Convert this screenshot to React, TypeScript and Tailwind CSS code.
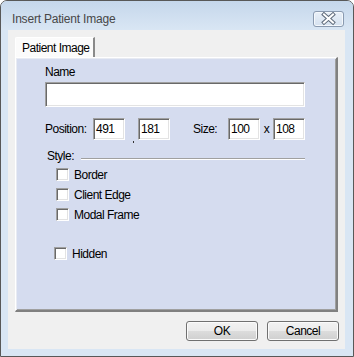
import React from "react";

const sunken =
  "bg-white border border-t-[#a0a0a0] border-l-[#a0a0a0] border-r-white border-b-white shadow-[inset_1px_1px_0_#696969,inset_-1px_-1px_0_#e3e3e3]";

function Field({ value, w = "w-[32px]" }: { value: string; w?: string }) {
  return (
    <div className={`${w} h-[22px] ${sunken} pl-[2px] pt-[3px] leading-[14px]`}>{value}</div>
  );
}

function Check({ label, pl }: { label: string; pl: string }) {
  return (
    <div className={`flex items-center h-[13px] ${pl}`}>
      <div className={`w-[13px] h-[13px] ${sunken}`} />
      <span className="ml-[5px] leading-[14px] mt-[1px] whitespace-nowrap">{label}</span>
    </div>
  );
}

const btn =
  "w-[72px] h-[20px] rounded-[3px] border border-[#707070] bg-[linear-gradient(#f2f2f2_0%,#ebebeb_50%,#dddddd_50%,#cfcfcf_100%)] shadow-[inset_0_0_0_1px_#fbfbfb] flex items-center justify-center leading-[14px] text-black";

export default function App() {
  return (
    <div className="w-[354px] h-[357px] bg-[#d9e6f4] border border-[#585858] rounded-t-[7px] flex flex-col overflow-hidden">
      <div className="h-[29px] flex items-start justify-between pl-[11px] pr-[9px] pt-[10px] bg-[linear-gradient(#c5d7eb,#d9e6f4)]">
        <span className="mt-[1px] text-[12px] leading-[14px] text-[#474747] font-['Liberation_Sans',Arial,sans-serif] tracking-[-0.2px]">
          Insert Patient Image
        </span>
        <div className="w-[31px] h-[16px] rounded-[3px] border border-[#8a9ab0] bg-[linear-gradient(#e9f0f8,#d5e1ef)] shadow-[inset_0_0_0_1px_#f4f8fc]">
          <svg width="29" height="14" viewBox="0 0 29 14">
            <path d="M10 2.5 L19 10.5 M19 2.5 L10 10.5" stroke="#5f6b7b" strokeWidth="4" strokeLinecap="square" />
            <path d="M10 2.5 L19 10.5 M19 2.5 L10 10.5" stroke="#ffffff" strokeWidth="2" strokeLinecap="square" />
          </svg>
        </div>
      </div>
      <div className="ml-[7px] mr-[8px] h-[319px] bg-[#f0f0f0] flex flex-col pl-[7px] pt-[7px] text-[12px] tracking-[-0.5px] text-black font-['Liberation_Sans',Arial,sans-serif]">
        <div className="flex">
          <div className="w-[80px] h-[20px] bg-[#fbfbfb] border-t border-l border-white border-r-2 border-r-[#8a8a8a] rounded-tl-[2px] pl-[6px] pt-[3px] leading-[14px] whitespace-nowrap">
            Patient Image
          </div>
        </div>
        <div className="w-[323px] h-[255px] bg-[#d5dcef] border-t border-l border-white border-r-2 border-b-2 border-r-[#808080] border-b-[#808080] shadow-[inset_1px_1px_0_#e8ebf3,inset_-1px_-1px_0_#a0a0a0] flex flex-col pl-[29px] pr-[31px] pt-[7px]">
          <div className="leading-[14px]">Name</div>
          <div className={`mt-[3px] w-[260px] h-[25px] ${sunken}`} />
          <div className="mt-[11px] flex items-center h-[22px]">
            <span className="w-[48px] leading-[14px] whitespace-nowrap">Position:</span>
            <Field value="491" />
            <div className="w-[13px] h-[22px] flex items-end justify-end pr-[4px]">
              <div className="w-[1px] h-[2px] bg-[#333] mb-[-3px]" />
            </div>
            <Field value="181" />
            <span className="ml-[23px] w-[35px] leading-[14px]">Size:</span>
            <Field value="100" />
            <span className="w-[13px] text-center leading-[14px]">x</span>
            <Field value="108" />
          </div>
          <div className="mt-[9px] flex items-start h-[14px]">
            <span className="ml-[2px] w-[34px] leading-[14px]">Style:</span>
            <div className="flex-1 mt-[9px] border-t border-t-[#a0a0a0] border-b border-b-white" />
          </div>
          <div className="mt-[5px]">
            <Check label="Border" pl="pl-[11px]" />
          </div>
          <div className="mt-[7px]">
            <Check label="Client Edge" pl="pl-[11px]" />
          </div>
          <div className="mt-[7px]">
            <Check label="Modal Frame" pl="pl-[11px]" />
          </div>
          <div className="mt-[26px]">
            <Check label="Hidden" pl="pl-[9px]" />
          </div>
        </div>
        <div className="mt-[9px] flex justify-end gap-[9px] pr-[6px]">
          <div className={btn}>OK</div>
          <div className={btn}>Cancel</div>
        </div>
      </div>
    </div>
  );
}
